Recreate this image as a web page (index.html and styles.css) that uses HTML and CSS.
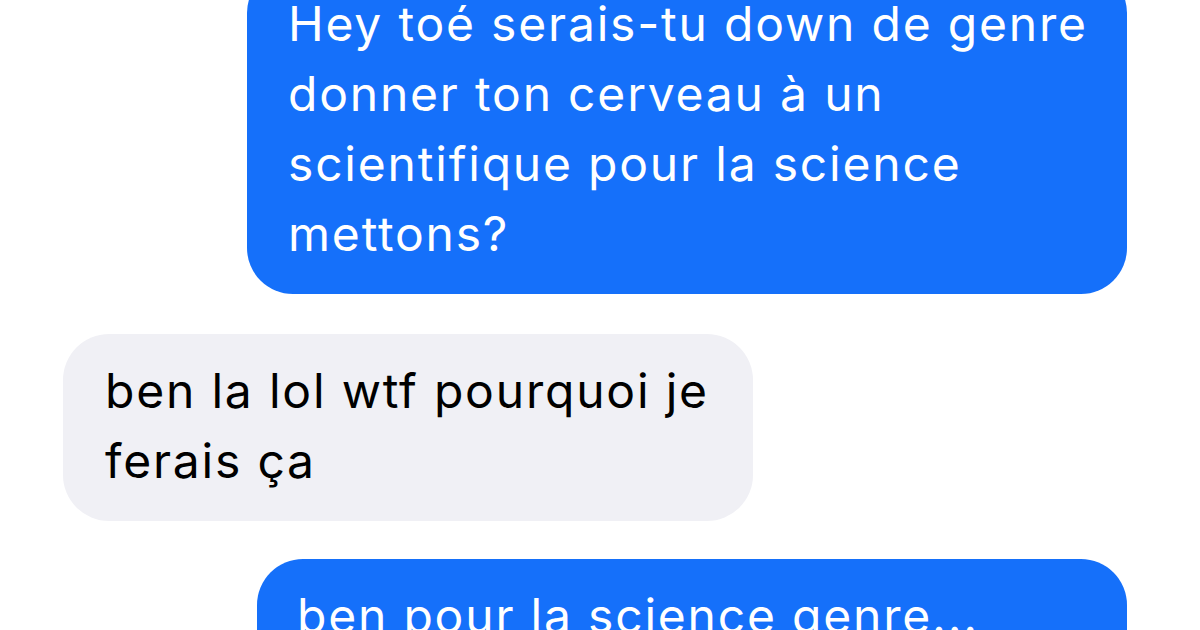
FILE: index.html
```html
<!DOCTYPE html>
<html lang="fr">
<head>
<meta charset="utf-8">
<title>Messages</title>
<link rel="stylesheet" href="styles.css">
</head>
<body>
<main class="thread">
  <div class="bubble sent first">Hey toé serais-tu down de genre<br>donner ton cerveau à un<br>scientifique pour la science<br>mettons?</div>
  <div class="bubble received">ben la lol wtf pourquoi je<br>ferais ça</div>
  <div class="bubble sent last">ben pour la science genre...</div>
</main>
</body>
</html>
```

FILE: styles.css
```css
html, body {
  margin: 0;
  padding: 0;
  background: #ffffff;
  overflow: hidden;
}

.thread {
  width: 1200px;
  height: 630px;
  display: flex;
  flex-direction: column;
  gap: 40px;
  font-family: "Inter", "Noto Sans", sans-serif;
  font-size: 48px;
  font-weight: 400;
  line-height: 70px;
  letter-spacing: 1.8px;
  overflow: hidden;
}

.bubble {
  border-radius: 46px;
  padding: 22px 40px 25px;
  box-sizing: border-box;
  white-space: nowrap;
}

.sent {
  align-self: flex-end;
  margin-right: 73px;
  background: #1570fa;
  color: #ffffff;
}

.first {
  width: 880px;
  padding-left: 41px;
  margin-top: -33px;
}

.received {
  align-self: flex-start;
  margin-left: 63px;
  width: 690px;
  padding-left: 42px;
  background: #f0f0f5;
  color: #000000;
}

.last {
  width: 870px;
  margin-top: -2px;
}
```
